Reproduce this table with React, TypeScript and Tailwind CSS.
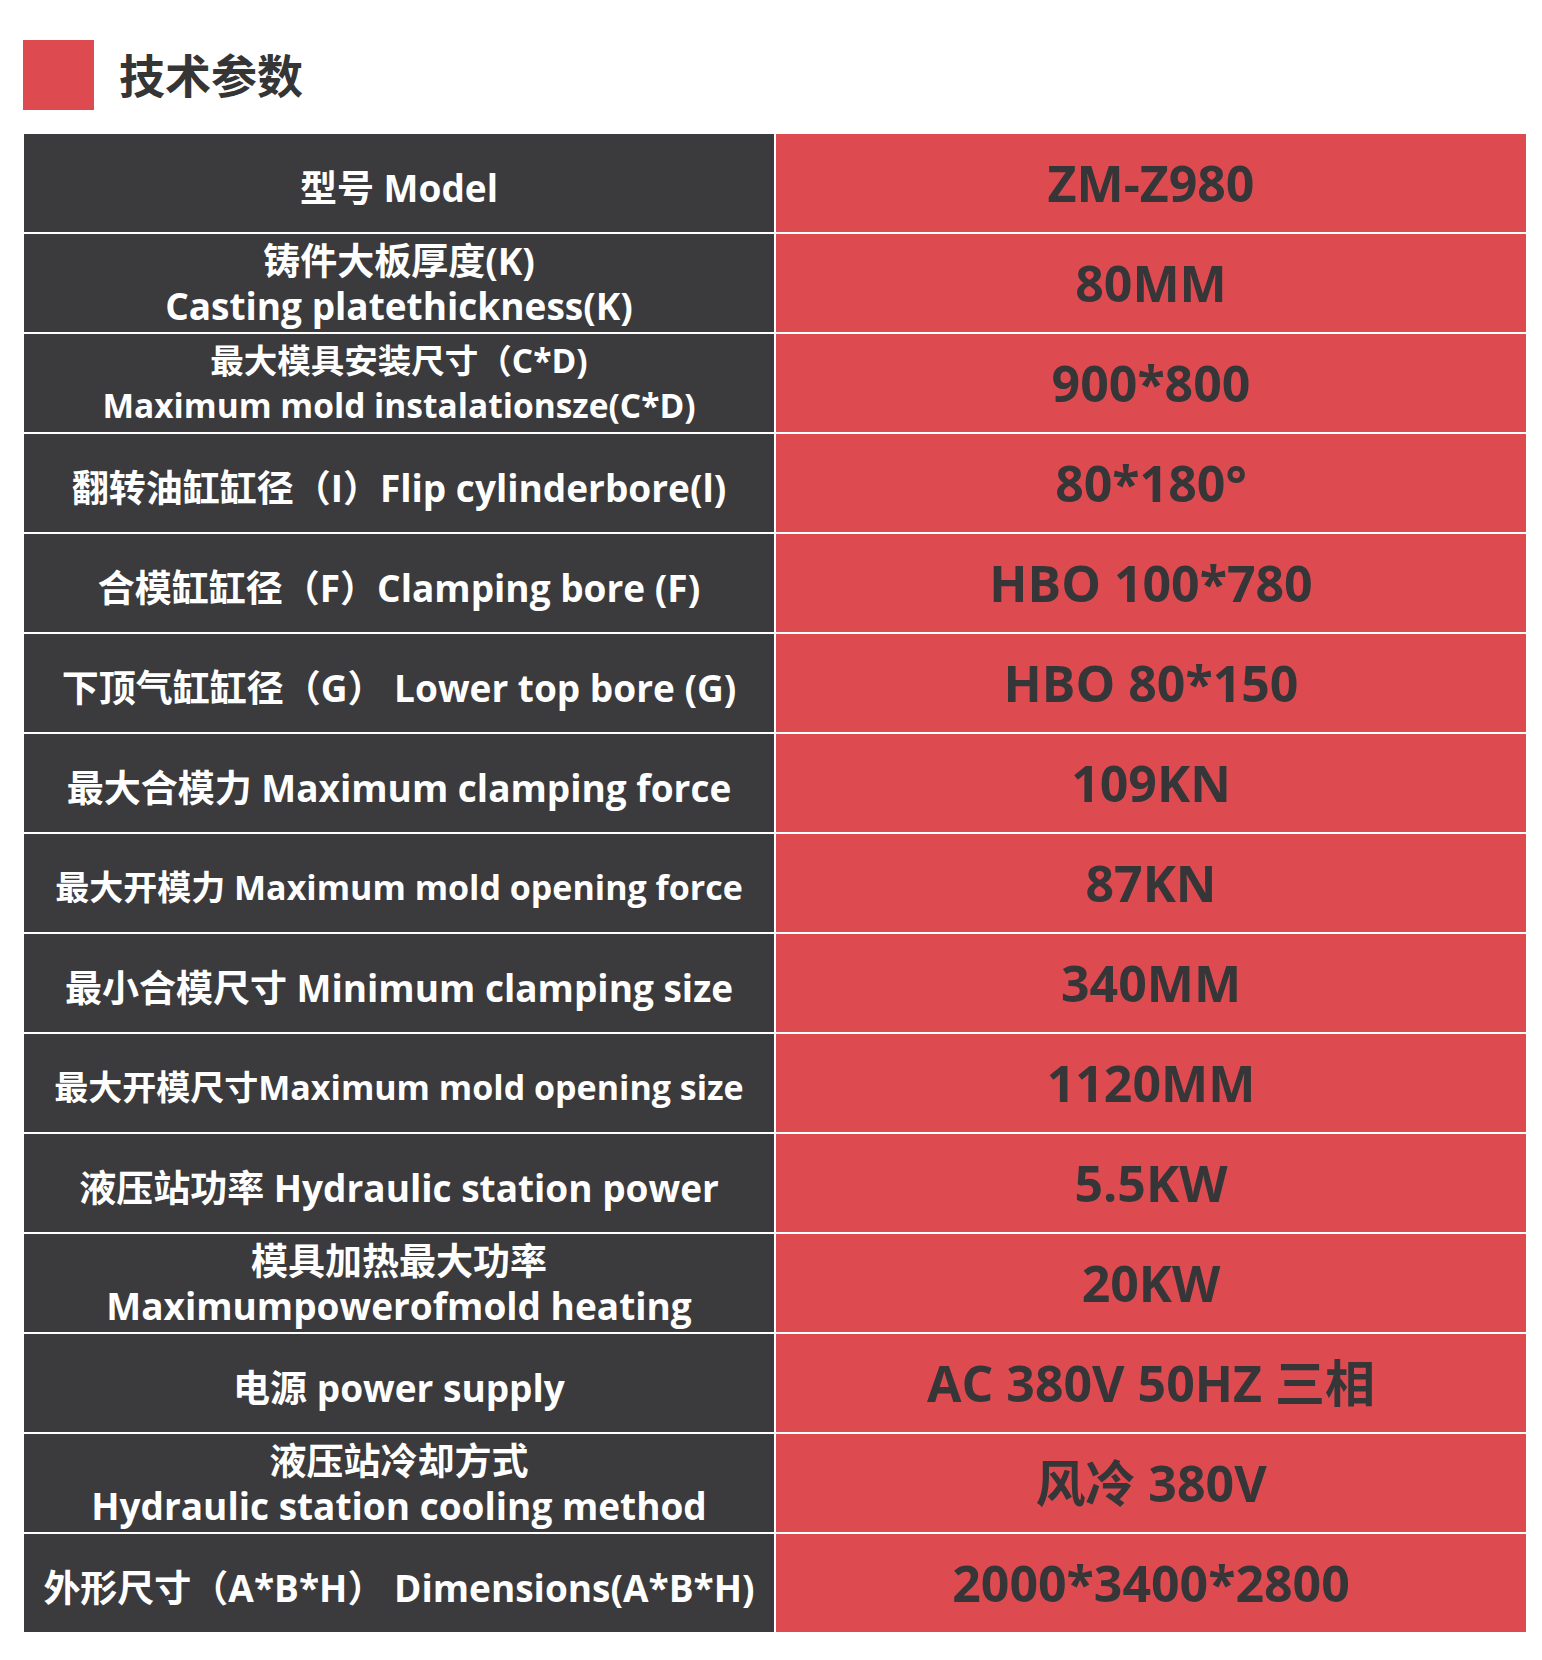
const specs = [
  { label: ['型号 Model'], value: 'ZM-Z980' },
  { label: ['铸件大板厚度(K)', 'Casting platethickness(K)'], value: '80MM' },
  { label: ['最大模具安装尺寸（C*D)', 'Maximum mold instalationsze(C*D)'], value: '900*800', size: 'text-[33.5px]' },
  { label: ['翻转油缸缸径（I）Flip cylinderbore(l)'], value: '80*180°' },
  { label: ['合模缸缸径（F）Clamping bore (F)'], value: 'HBO 100*780' },
  { label: ['下顶气缸缸径（G） Lower top bore (G)'], value: 'HBO 80*150' },
  { label: ['最大合模力 Maximum clamping force'], value: '109KN' },
  { label: ['最大开模力 Maximum mold opening force'], value: '87KN', size: 'text-[34px]' },
  { label: ['最小合模尺寸 Minimum clamping size'], value: '340MM' },
  { label: ['最大开模尺寸Maximum mold opening size'], value: '1120MM', size: 'text-[34px]' },
  { label: ['液压站功率 Hydraulic station power'], value: '5.5KW' },
  { label: ['模具加热最大功率', 'Maximumpowerofmold heating'], value: '20KW' },
  { label: ['电源 power supply'], value: 'AC 380V 50HZ 三相' },
  { label: ['液压站冷却方式', 'Hydraulic station cooling method'], value: '风冷 380V' },
  { label: ['外形尺寸（A*B*H） Dimensions(A*B*H)'], value: '2000*3400*2800' },
];

const font = "font-['Open_Sans','Noto_Sans_CJK_SC',sans-serif]";

export default function App() {
  return (
    <div className={`w-[1542px] h-[1660px] bg-white pt-[40px] pl-[23px] ${font}`}>
      <div className="flex items-center">
        <div className="w-[71px] h-[70px] bg-[#dd4b51]" />
        <h1 className="ml-[25px] -mt-[4px] text-[46px] font-bold leading-none text-[#353535] font-['Noto_Sans_CJK_SC',sans-serif]">技术参数</h1>
      </div>

      <div className="mt-[24px] ml-[1px] w-[1502px] grid grid-cols-2 gap-x-[2px] gap-y-[2px]">
        {specs.map((row, i) => (
          <div key={i} className="contents">
            <div className="h-[98px] bg-[#3b3a3c] flex flex-col items-center justify-center text-white font-bold">
              {row.label.map((line, j) => (
                <div
                  key={j}
                  className={`${row.size ?? 'text-[37px]'} ${row.label.length > 1 ? 'leading-[45px]' : 'leading-none pt-[8px]'} whitespace-nowrap`}
                >
                  {line}
                </div>
              ))}
            </div>
            <div className="h-[98px] bg-[#dd4b51] flex items-center justify-center">
              <span className="text-[50px] font-bold leading-none text-[#363638] whitespace-nowrap">{row.value}</span>
            </div>
          </div>
        ))}
      </div>
    </div>
  );
}
